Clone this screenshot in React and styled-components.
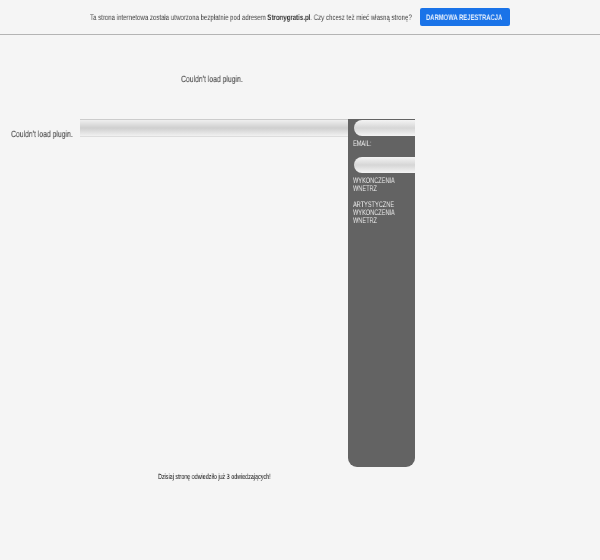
import styled, { createGlobalStyle } from "styled-components";

const GlobalStyle = createGlobalStyle`
  html, body {
    margin: 0;
    padding: 0;
    background: #f5f5f5;
    font-family: "Liberation Sans", Arial, sans-serif;
    text-rendering: geometricPrecision;
  }
`;

const Page = styled.div`
  width: 600px;
  height: 560px;
  overflow: hidden;
`;

const TopBar = styled.header`
  display: flex;
  justify-content: center;
  align-items: center;
  gap: 8px;
  height: 34px;
  border-bottom: 1px solid #b4b4b4;
  font-size: 8px;
  color: #444;
`;

// the text in the picture is narrower than any installed font
const Squeezed = styled.span`
  display: block;
  width: ${(p) => p.$w}px;
  white-space: nowrap;
  transform: scaleX(${(p) => p.$s});
  transform-origin: left center;
  will-change: transform;
`;

const BoldName = styled.b`
  color: #333;
`;

const SignUp = styled.a`
  display: flex;
  align-items: center;
  width: 90px;
  height: 18px;
  padding-left: 6px;
  box-sizing: border-box;
  background: #1a73e8;
  border-radius: 2px;
  color: #e8f1fd;
  font-size: 8px;
  font-weight: 700;
`;

const Content = styled.main`
  display: grid;
  grid-template-columns: 80px 268px 67px;
  grid-template-rows: 84px 348px auto;
`;

const Missing = styled(Squeezed)`
  font-size: 9px;
  color: #555;
  -webkit-text-stroke: 0.15px #555;
`;

const TopSlot = styled.div`
  grid-column: 1 / 4;
  padding: 39px 0 0 181px;
`;

const LeftSlot = styled.div`
  padding: 10px 0 0 11px;
`;

const Banner = styled.div`
  height: 16px;
  border-top: 1px solid #ccc;
  border-bottom: 1px solid #ddd;
  background: linear-gradient(#efefef, #cfcfcf 50%, #f1f1f1);
`;

const Sidebar = styled.aside`
  display: flex;
  flex-direction: column;
  background: #636363;
  border-radius: 0 0 9px 9px;
  padding-top: 1px;
  color: #eee;
  font-size: 8px;
  line-height: 8px;
`;

const Pill = styled.div`
  flex: none;
  margin: ${(p) => p.$top}px 0 0 6px;
  height: 16px;
  border-radius: 9px 0 0 9px;
  background: linear-gradient(#f4f4f4, #d6d6d6 50%, #f4f4f4);
`;

const Label = styled.div`
  width: 85px;
  margin: ${(p) => p.$top}px 0 0 5px;
  transform: scaleX(0.7);
  transform-origin: left top;
  will-change: transform;
`;

const Footer = styled.div`
  grid-column: 1 / 4;
  padding: 5px 0 0 158px;
  font-size: 7.5px;
  color: #111;
`;

export default function App() {
  return (
    <Page>
      <GlobalStyle />
      <TopBar>
        <Squeezed $w={322} $s={0.761}>
          Ta strona internetowa została utworzona bezpłatnie pod adresem{" "}
          <BoldName>Stronygratis.pl</BoldName>. Czy chcesz też mieć własną stronę?
        </Squeezed>
        <SignUp>
          <Squeezed $w={78} $s={0.735}>DARMOWA REJESTRACJA</Squeezed>
        </SignUp>
      </TopBar>
      <Content>
        <TopSlot>
          <Missing $w={62} $s={0.76}>Couldn't load plugin.</Missing>
        </TopSlot>
        <LeftSlot>
          <Missing $w={62} $s={0.76}>Couldn't load plugin.</Missing>
        </LeftSlot>
        <Banner />
        <Sidebar>
          <Pill $top={0} />
          <Label $top={4}>EMAIL:</Label>
          <Pill $top={9} />
          <Label $top={4}>WYKONCZENIA WNETRZ</Label>
          <Label $top={8}>ARTYSTYCZNE WYKONCZENIA WNETRZ</Label>
        </Sidebar>
        <Footer>
          <Squeezed $w={113} $s={0.716}>Dzisiaj stronę odwiedziło już 3 odwiedzających!</Squeezed>
        </Footer>
      </Content>
    </Page>
  );
}
